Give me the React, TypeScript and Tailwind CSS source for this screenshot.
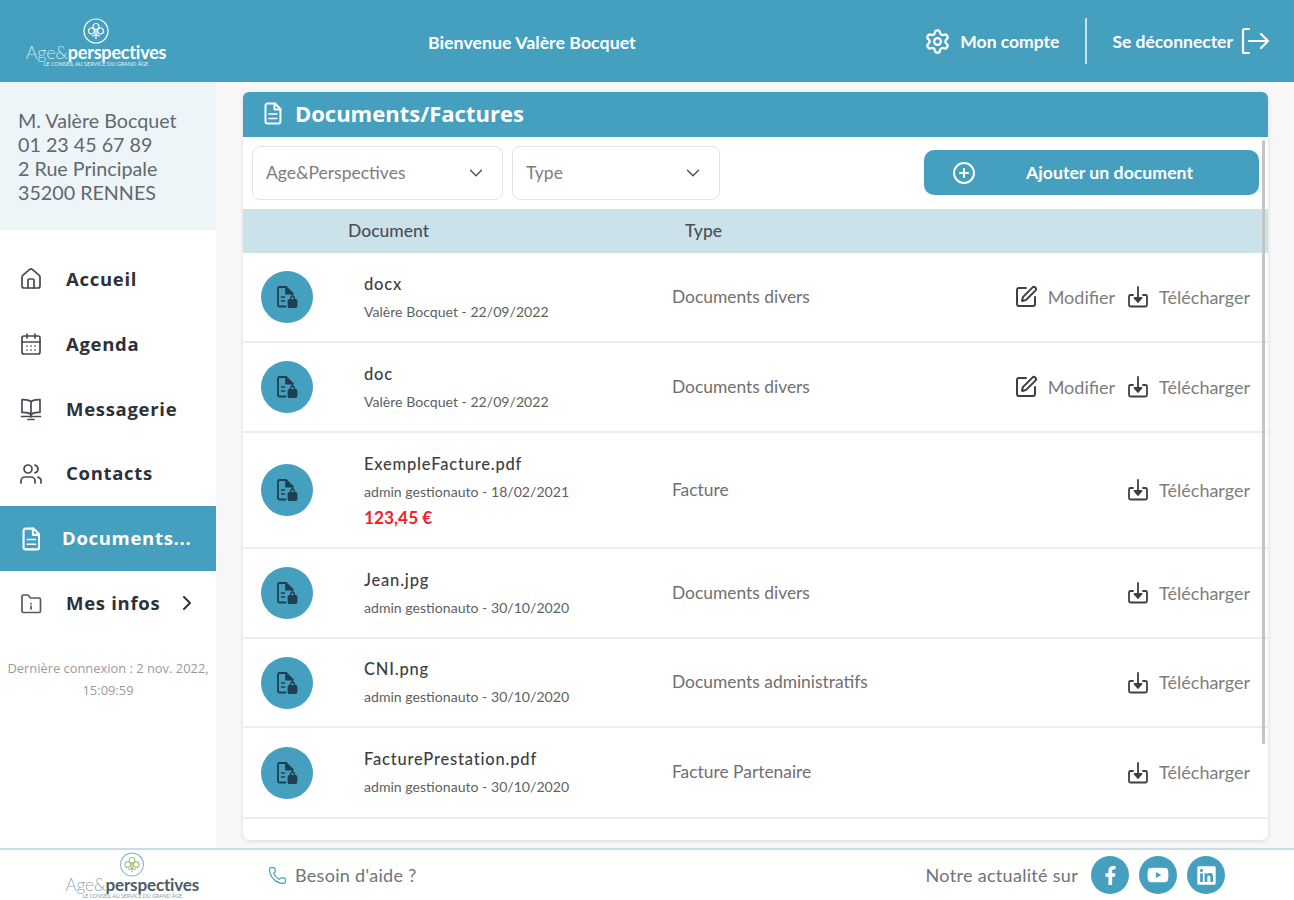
import { Settings, CirclePlus, Home, CalendarDays, Users, ChevronRight, ChevronDown, SquarePen, Phone } from 'lucide-react'
import { FaFacebookF, FaLinkedin, FaYoutube } from 'react-icons/fa'

const docs = [
  { name: 'docx', by: 'Valère Bocquet - 22/09/2022', type: 'Documents divers', edit: true, h: 'h-[90px]' },
  { name: 'doc', by: 'Valère Bocquet - 22/09/2022', type: 'Documents divers', edit: true, h: 'h-[90px]' },
  { name: 'ExempleFacture.pdf', by: 'admin gestionauto - 18/02/2021', type: 'Facture', price: '123,45 €', h: 'h-[116px]' },
  { name: 'Jean.jpg', by: 'admin gestionauto - 30/10/2020', type: 'Documents divers', h: 'h-[90px]' },
  { name: 'CNI.png', by: 'admin gestionauto - 30/10/2020', type: 'Documents administratifs', h: 'h-[89px]' },
  { name: 'FacturePrestation.pdf', by: 'admin gestionauto - 30/10/2020', type: 'Facture Partenaire', h: 'h-[91px]' },
]

function Logo({ dark }: { dark?: boolean }) {
  const stroke = dark ? '#7fb9cf' : '#ffffff'
  const petal = dark ? '#9dbf7a' : '#ffffff'
  return (
    <div className="flex flex-col items-center">
      <svg width="26" height="26" viewBox="0 0 26 26" fill="none">
        <circle cx="13" cy="13" r="12" stroke={stroke} strokeWidth="1.2" />
        <circle cx="13" cy="8.5" r="3" stroke={petal} strokeWidth="1.2" />
        <circle cx="8.5" cy="13" r="3" stroke={petal} strokeWidth="1.2" />
        <circle cx="17.5" cy="13" r="3" stroke={petal} strokeWidth="1.2" />
        <path d="M13 11v10M9 18c2 0 4-1 4-3 0 2 2 3 4 3" stroke={petal} strokeWidth="1.2" />
      </svg>
      <div className={`text-[18px] leading-[16px] tracking-[-0.2px] font-['Lato',sans-serif] ${dark ? 'text-[#4c5c66]' : 'text-white'}`}>
        <span className={`font-light ${dark ? 'text-[#9aa5ab]' : 'text-white/75'}`}>Age&amp;</span>
        <span className="font-bold">perspectives</span>
      </div>
      <div className={`mt-[1px] text-[5.500px] leading-[6px] font-['Lato',sans-serif] ${dark ? 'text-[#7d9aa8]' : 'text-white/85'}`}>
        LE CONSEIL AU SERVICE DU GRAND ÂGE
      </div>
    </div>
  )
}

function LogoutIcon() {
  return (
    <svg width="30" height="30" viewBox="0 0 30 30" fill="none" stroke="white" strokeWidth="2.200" strokeLinecap="round" strokeLinejoin="round">
      <path d="M9 3H4.500A1.500 1.500 0 0 0 3 4.500V25.500A1.500 1.500 0 0 0 4.500 27H9" />
      <path d="M9 15H28M21 8l7 7-7 7" />
    </svg>
  )
}

function MessageIcon() {
  return (
    <svg width="24" height="24" viewBox="0 0 24 24" fill="none" stroke="#454b52" strokeWidth="1.700" strokeLinecap="round" strokeLinejoin="round">
      <path d="M12 4.500C10 3 7 2.500 3 2.700V15.500C7 15.300 10 15.800 12 17.500C14 15.800 17 15.300 21 15.500V2.700C17 2.500 14 3 12 4.500Z" />
      <path d="M12 4.500V20M2.500 19.500h19" />
      <path d="M9 22.500h6" />
    </svg>
  )
}

function FolderInfoIcon() {
  return (
    <svg width="24" height="24" viewBox="0 0 24 24" fill="none" stroke="#555b62" strokeWidth="1.700" strokeLinecap="round" strokeLinejoin="round">
      <path d="M3 5.500A1.500 1.500 0 0 1 4.500 4H9l2.500 3H20a1.500 1.500 0 0 1 1.500 1.500V20A1.500 1.500 0 0 1 20 21.500H4.500A1.500 1.500 0 0 1 3 20Z" />
      <path d="M12 12.500v.2M12 15v3" />
    </svg>
  )
}

function DownloadIcon() {
  return (
    <svg width="22" height="24" viewBox="0 0 22 24" fill="none" stroke="#3f3f3f" strokeWidth="1.800" strokeLinecap="round" strokeLinejoin="round">
      <path d="M6 10H3.500A1.500 1.500 0 0 0 2 11.500V20a1.500 1.500 0 0 0 1.500 1.500h15A1.500 1.500 0 0 0 20 20V11.500A1.500 1.500 0 0 0 18.500 10H16" />
      <path d="M11 2v12" />
      <path d="M7.500 13h7L11 17Z" fill="#3f3f3f" />
    </svg>
  )
}

// page with folded corner and two rows, the light one of the title bar and the active nav item
function DocIcon({ size }: { size: number }) {
  return (
    <svg width={size * 0.78} height={size} viewBox="0 0 18 23" fill="none" stroke="white" strokeWidth="2" strokeLinejoin="round" strokeLinecap="round">
      <path d="M3.500 1.500H11L16.500 7V19.500A2 2 0 0 1 14.500 21.500H3.500A2 2 0 0 1 1.500 19.500V3.500A2 2 0 0 1 3.500 1.500Z" />
      <path d="M10.500 1.500V7.500H16.500" />
      <path d="M5 12h8M5 16.500h8" strokeWidth="1.400" />
    </svg>
  )
}

// page with a small lock at the bottom right, used in the round badge of each row
function FileLockIcon() {
  return (
    <svg width="22" height="22" viewBox="0 0 22 22" fill="none" stroke="#1f3f52" strokeWidth="1.800" strokeLinejoin="round" strokeLinecap="round">
      <path d="M9.500 20.500H3.500A1.500 1.500 0 0 1 2 19V2.500A1.500 1.500 0 0 1 3.500 1H10L16.500 7.500V10" />
      <path d="M10 1V7.500H16.500" fill="#1f3f52" />
      <path d="M5.500 11h3M5.500 15h3" strokeWidth="1.400" />
      <rect x="12.500" y="14" width="8" height="7" rx="1" fill="#1f3f52" />
      <path d="M14.500 14v-1.500a2 2 0 0 1 4 0V14" strokeWidth="1.400" />
    </svg>
  )
}

function NavItem({ icon, label, active, chevron }: { icon: React.ReactNode; label: string; active?: boolean; chevron?: boolean }) {
  return (
    <div className={`flex h-[64.800px] items-center pl-[19px] font-['Open_Sans',sans-serif] text-[18.500px] font-bold tracking-[0.7px] ${active ? 'bg-[#459fbf] text-white' : 'text-[#2d3138]'}`}>
      <span className="flex w-[24px] justify-center">{icon}</span>
      <span className={active ? 'ml-[19px] mb-[1px]' : 'ml-[23px] mb-[1px]'}>{label}</span>
      {chevron && <ChevronRight size={24} strokeWidth={2} className="ml-[15px] text-[#333]" />}
    </div>
  )
}

function Select({ label, w, mr }: { label: string; w: string; mr: string }) {
  return (
    <div className={`flex h-[54px] items-center justify-between rounded-[8px] border border-[#e3e3e3] bg-white pl-[13px] text-[17.500px] text-[#7d7d7d] ${w} ${mr}`}>
      <span>{label}</span>
      <ChevronDown size={22} strokeWidth={1.600} className="text-[#555]" />
    </div>
  )
}

export default function App() {
  return (
    <div className="flex h-screen w-full flex-col overflow-hidden bg-white font-['Lato',sans-serif]">
      <header className="flex h-[82px] shrink-0 items-center bg-[#459fbf] text-white">
        <div className="flex w-[192px] justify-center pt-[2px]">
          <Logo />
        </div>
        <div className="ml-[236px] pt-[2px] text-[17.800px] font-bold">Bienvenue Valère Bocquet</div>
        <div className="ml-auto flex items-center pr-[24px]">
          <Settings size={27} strokeWidth={2} />
          <span className="ml-[9px] pt-[2px] text-[17.500px] font-bold">Mon compte</span>
          <span className="ml-[26px] mr-[25px] h-[46px] w-[2px] bg-white/70" />
          <span className="pt-[2px] text-[17.500px] font-bold">Se déconnecter</span>
          <span className="ml-[7px]"><LogoutIcon /></span>
        </div>
      </header>

      <div className="flex min-h-0 flex-1 bg-[#f7f7f7]">
        <aside className="flex w-[216px] shrink-0 flex-col bg-white">
          <div className="h-[148px] bg-[#eef5f9] pl-[18px] pt-[27px] text-[19.700px] leading-[24px] text-[#62686e]">
            <p>M. Valère Bocquet</p>
            <p>01 23 45 67 89</p>
            <p>2 Rue Principale</p>
            <p>35200 RENNES</p>
          </div>
          <nav className="mt-[17px]">
            <NavItem icon={<Home size={24} strokeWidth={1.700} className="text-[#454b52]" />} label="Accueil" />
            <NavItem icon={<CalendarDays size={24} strokeWidth={1.700} className="text-[#454b52]" />} label="Agenda" />
            <NavItem icon={<MessageIcon />} label="Messagerie" />
            <NavItem icon={<Users size={24} strokeWidth={1.700} className="text-[#454b52]" />} label="Contacts" />
            <NavItem icon={<DocIcon size={24} />} label="Documents..." active />
            <NavItem icon={<FolderInfoIcon />} label="Mes infos" chevron />
          </nav>
          <p className="mt-[21px] px-[2px] text-center font-['Open_Sans',sans-serif] text-[12.900px] leading-[22px] text-[#9a9a9a]">
            Dernière connexion : 2 nov. 2022, 15:09:59
          </p>
        </aside>

        <main className="min-w-0 flex-1 pl-[27px] pr-[26px] pt-[10px]">
          <section className="relative h-[748px] overflow-hidden rounded-[6px] bg-white shadow-[0_1px_4px_rgba(0,0,0,0.12)]">
            <div className="flex h-[45px] items-center bg-[#459fbf] pl-[21px] pb-[2px] font-['Open_Sans',sans-serif] text-[22px] font-bold text-white">
              <DocIcon size={23} />
              <span className="ml-[13px]">Documents/Factures</span>
            </div>

            <div className="flex h-[72px] items-start pl-[9px] pr-[9px] pt-[9px]">
              <Select label="Age&Perspectives" w="w-[251px]" mr="mr-[9px] pr-[15px]" />
              <Select label="Type" w="w-[208px]" mr="pr-[15px]" />
              <button className="ml-auto mt-[4px] flex h-[45px] w-[335px] items-center rounded-[10px] bg-[#459fbf] pl-[28px] text-[17.700px] font-bold text-white">
                <CirclePlus size={24} strokeWidth={2} />
                <span className="ml-[50px] pt-[1px]">Ajouter un document</span>
              </button>
            </div>

            <div className="flex h-[44px] items-center bg-[#cce2ea] pt-[1px] text-[17.500px] font-medium text-[#4a4f55]">
              <span className="w-[442px] pl-[105px]">Document</span>
              <span>Type</span>
            </div>

            {docs.map((d) => (
              <div key={d.name} className={`flex items-center border-b-2 border-[#eeeeee] pl-[18px] pr-[18px] ${d.h}`}>
                <span className="flex h-[52px] w-[52px] shrink-0 items-center justify-center rounded-full bg-[#459fbf]">
                  <FileLockIcon />
                </span>
                <div className="ml-[51px] w-[308px] shrink-0">
                  <p className="text-[16.500px] font-medium leading-[22px] tracking-[0.8px] text-[#3e3e3e]">{d.name}</p>
                  <p className="mt-[7px] text-[14.100px] leading-[20px] text-[#5f5f5f]">{d.by}</p>
                  {d.price && <p className="mt-[6px] text-[17.300px] font-bold leading-[20px] text-[#f0232e]">{d.price}</p>}
                </div>
                <span className="text-[17.400px] text-[#6f6f6f]">{d.type}</span>
                <div className="ml-auto flex items-center text-[18px] text-[#7d7d7d]">
                  {d.edit && (
                    <>
                      <SquarePen size={24} strokeWidth={2} className="text-[#3f3f3f]" />
                      <span className="ml-[10px] mr-[12px]">Modifier</span>
                    </>
                  )}
                  <DownloadIcon />
                  <span className="ml-[10px]">Télécharger</span>
                </div>
              </div>
            ))}

            <span className="absolute right-[3px] top-[48px] h-[604px] w-[3px] rounded-full bg-[#c4c4c4]" />
          </section>
        </main>
      </div>

      <footer className="flex h-[52px] shrink-0 items-center border-t-2 border-[#c7dde8] bg-white">
        <div className="flex w-[264px] justify-center">
          <div className="scale-[0.95]"><Logo dark /></div>
        </div>
        <Phone size={19} strokeWidth={1.500} className="ml-[4px] text-[#459fbf]" />
        <span className="ml-[8px] text-[18px] tracking-[0.3px] text-[#6d7479]">Besoin d'aide ?</span>
        <div className="ml-auto flex items-center pr-[69px]">
          <span className="mr-[13px] text-[18px] tracking-[0.3px] text-[#6d7479]">Notre actualité sur</span>
          <span className="flex h-[38px] w-[38px] items-center justify-center rounded-full bg-[#459fbf] text-white"><FaFacebookF size={19} /></span>
          <span className="ml-[10px] flex h-[38px] w-[38px] items-center justify-center rounded-full bg-[#459fbf] text-white"><FaYoutube size={22} /></span>
          <span className="ml-[10px] flex h-[38px] w-[38px] items-center justify-center rounded-full bg-[#459fbf] text-white"><FaLinkedin size={21} /></span>
        </div>
      </footer>
    </div>
  )
}
